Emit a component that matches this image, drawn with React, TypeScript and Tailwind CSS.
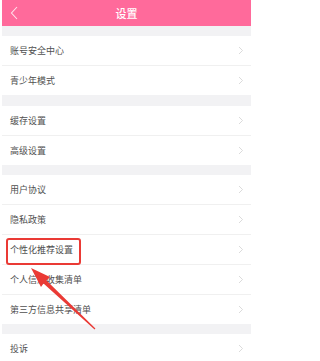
const groups: string[][] = [
  ["账号安全中心", "青少年模式"],
  ["缓存设置", "高级设置"],
  ["用户协议", "隐私政策", "个性化推荐设置", "个人信息收集清单", "第三方信息共享清单"],
  ["投诉"],
];

function Chevron() {
  return (
    <svg width="6" height="9" viewBox="0 0 6 9" className="shrink-0">
      <polyline points="1,1 4.5,4.5 1,8" fill="none" stroke="#d2d2d2" strokeWidth="0.8" />
    </svg>
  );
}

function Row({ label, last }: { label: string; last: boolean }) {
  return (
    <div
      className={
        last
          ? "flex h-[29px] items-center justify-between bg-white pl-2 pr-[7px]"
          : "flex h-[30px] items-center justify-between border-b border-[#f0f0f0] bg-white pl-2 pr-[7px]"
      }
    >
      <span className="text-[9px] leading-none text-[#505050]">{label}</span>
      <Chevron />
    </div>
  );
}

export default function App() {
  return (
    <div
      className="relative h-[361px] w-[251px] overflow-hidden bg-white pl-[2px]"
      style={{ fontFamily: '"Noto Sans CJK SC", "Noto Sans", sans-serif' }}
    >
      {/* 顶栏 */}
      <div className="relative flex h-[26px] items-center justify-center bg-[#ff6a9b]">
        <svg width="10" height="14" viewBox="0 0 10 14" className="absolute left-[8px] top-[6px]">
          <polyline points="7,1 1.5,7 7,13" fill="none" stroke="#ffe3ec" strokeWidth="1.1" />
        </svg>
        <span className="text-[11px] font-medium text-white">设置</span>
      </div>

      {groups.map((g, gi) => (
        <div key={gi}>
          <div className={gi === 1 ? "h-[11px] bg-[#f2f2f4]" : "h-[10px] bg-[#f2f2f4]"} />
          {g.map((label, i) => (
            <Row key={label} label={label} last={i === g.length - 1} />
          ))}
        </div>
      ))}

      {/* 标注框 */}
      <div className="absolute left-[6px] top-[238px] h-[27px] w-[75px] rounded-[3px] border-2 border-[#ea3a35]" />

      {/* 箭头 */}
      <svg width="251" height="361" className="pointer-events-none absolute left-0 top-0">
        <polygon
          points="31,268 50,277 46.5,280.5 95.4,328.6 94.6,329.4 43.5,283.5 41,287"
          fill="#ea3a35"
        />
      </svg>
    </div>
  );
}
